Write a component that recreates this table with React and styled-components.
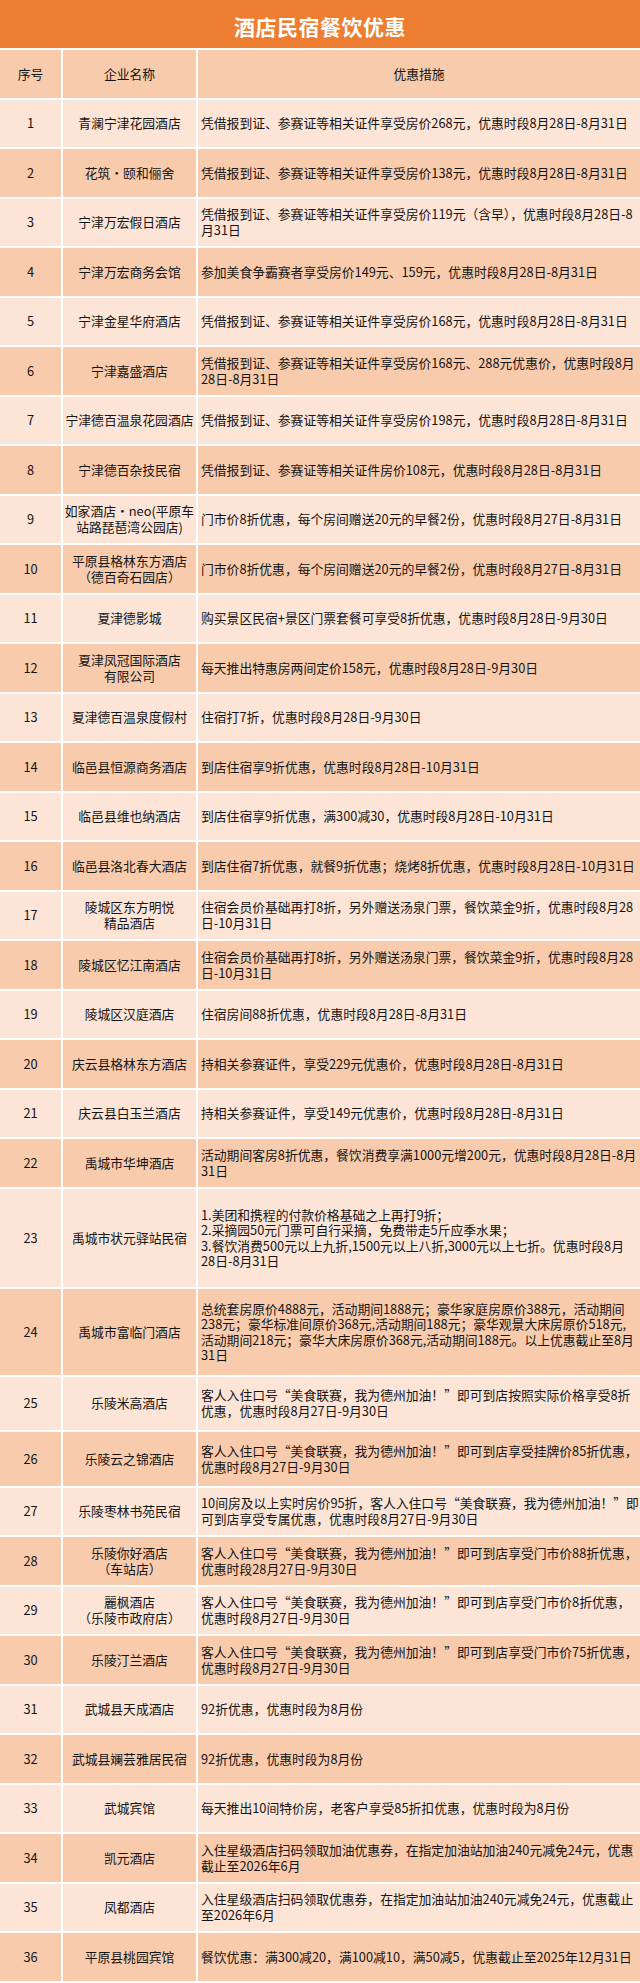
import React from "react";
import styled, { createGlobalStyle } from "styled-components";

const GlobalStyle = createGlobalStyle`
  html, body { margin: 0; padding: 0; background: #ffffff; }
  body {
    font-family: "Noto Sans CJK SC", "Noto Sans", sans-serif;
    color: #151515;
  }
`;

const Page = styled.div`
  width: 640px;
  background: #ffffff;
`;

const TitleBar = styled.div`
  height: 48px;
  margin-bottom: 2px;
  background: #ed7d31;
  color: #ffffff;
  display: flex;
  align-items: center;
  justify-content: center;
  padding-top: 4px;
  box-sizing: border-box;
  font-size: 21px;
  font-weight: 700;
  letter-spacing: 0.5px;
`;

const Table = styled.div`
  display: flex;
  flex-direction: column;
  gap: 2px;
`;

const Row = styled.div`
  display: grid;
  grid-template-columns: 61px 133px 1fr;
  column-gap: 2px;
  height: ${(p) => p.$h}px;
`;

const Cell = styled.div`
  background: ${(p) => (p.$dark ? "#f8cbad" : "#fce4d6")};
  display: flex;
  align-items: center;
  justify-content: ${(p) => (p.$left ? "flex-start" : "center")};
  text-align: ${(p) => (p.$left ? "left" : "center")};
  padding: ${(p) => (p.$left ? "0 0 0 3px" : "0")};
  font-size: 12.8px;
  line-height: ${(p) => p.$lh}px;
  white-space: nowrap;
`;

const Lines = styled.div`
  display: flex;
  flex-direction: column;
  align-items: ${(p) => (p.$left ? "flex-start" : "center")};
`;

const rows = [
  ["青澜宁津花园酒店", "凭借报到证、参赛证等相关证件享受房价268元，优惠时段8月28日-8月31日"],
  ["花筑·颐和俪舍", "凭借报到证、参赛证等相关证件享受房价138元，优惠时段8月28日-8月31日"],
  ["宁津万宏假日酒店", ["凭借报到证、参赛证等相关证件享受房价119元（含早），优惠时段8月28日-8", "月31日"]],
  ["宁津万宏商务会馆", "参加美食争霸赛者享受房价149元、159元，优惠时段8月28日-8月31日"],
  ["宁津金星华府酒店", "凭借报到证、参赛证等相关证件享受房价168元，优惠时段8月28日-8月31日"],
  ["宁津嘉盛酒店", ["凭借报到证、参赛证等相关证件享受房价168元、288元优惠价，优惠时段8月", "28日-8月31日"]],
  ["宁津德百温泉花园酒店", "凭借报到证、参赛证等相关证件享受房价198元，优惠时段8月28日-8月31日"],
  ["宁津德百杂技民宿", "凭借报到证、参赛证等相关证件房价108元，优惠时段8月28日-8月31日"],
  [["如家酒店·neo(平原车", "站路琵琶湾公园店)"], "门市价8折优惠，每个房间赠送20元的早餐2份，优惠时段8月27日-8月31日"],
  [["平原县格林东方酒店", "（德百奇石园店）"], "门市价8折优惠，每个房间赠送20元的早餐2份，优惠时段8月27日-8月31日"],
  ["夏津德影城", "购买景区民宿+景区门票套餐可享受8折优惠，优惠时段8月28日-9月30日"],
  [["夏津凤冠国际酒店", "有限公司"], "每天推出特惠房两间定价158元，优惠时段8月28日-9月30日"],
  ["夏津德百温泉度假村", "住宿打7折，优惠时段8月28日-9月30日"],
  ["临邑县恒源商务酒店", "到店住宿享9折优惠，优惠时段8月28日-10月31日"],
  ["临邑县维也纳酒店", "到店住宿享9折优惠，满300减30，优惠时段8月28日-10月31日"],
  ["临邑县洛北春大酒店", "到店住宿7折优惠，就餐9折优惠；烧烤8折优惠，优惠时段8月28日-10月31日"],
  [["陵城区东方明悦", "精品酒店"], ["住宿会员价基础再打8折，另外赠送汤泉门票，餐饮菜金9折，优惠时段8月28", "日-10月31日"]],
  ["陵城区忆江南酒店", ["住宿会员价基础再打8折，另外赠送汤泉门票，餐饮菜金9折，优惠时段8月28", "日-10月31日"]],
  ["陵城区汉庭酒店", "住宿房间88折优惠，优惠时段8月28日-8月31日"],
  ["庆云县格林东方酒店", "持相关参赛证件，享受229元优惠价，优惠时段8月28日-8月31日"],
  ["庆云县白玉兰酒店", "持相关参赛证件，享受149元优惠价，优惠时段8月28日-8月31日"],
  ["禹城市华坤酒店", ["活动期间客房8折优惠，餐饮消费享满1000元增200元，优惠时段8月28日-8月", "31日"]],
  [
    "禹城市状元驿站民宿",
    [
      "1.美团和携程的付款价格基础之上再打9折；",
      "2.采摘园50元门票可自行采摘，免费带走5斤应季水果；",
      "3.餐饮消费500元以上九折,1500元以上八折,3000元以上七折。优惠时段8月",
      "28日-8月31日",
    ],
    15.5,
    98,
  ],
  [
    "禹城市富临门酒店",
    [
      "总统套房原价4888元，活动期间1888元；豪华家庭房原价388元，活动期间",
      "238元；豪华标准间原价368元,活动期间188元；豪华观景大床房原价518元,",
      "活动期间218元；豪华大床房原价368元,活动期间188元。以上优惠截止至8月",
      "31日",
    ],
    15.5,
    86,
  ],
  ["乐陵米高酒店", ["客人入住口号“美食联赛，我为德州加油！”即可到店按照实际价格享受8折", "优惠，优惠时段8月27日-9月30日"], 16, 53],
  ["乐陵云之锦酒店", ["客人入住口号“美食联赛，我为德州加油！”即可到店享受挂牌价85折优惠，", "优惠时段8月27日-9月30日"], 16, 54],
  ["乐陵枣林书苑民宿", ["10间房及以上实时房价95折，客人入住口号“美食联赛，我为德州加油！”即", "可到店享受专属优惠，优惠时段8月27日-9月30日"]],
  [["乐陵你好酒店", "（车站店）"], ["客人入住口号“美食联赛，我为德州加油！”即可到店享受门市价88折优惠，", "优惠时段28月27日-9月30日"]],
  [["麗枫酒店", "（乐陵市政府店）"], ["客人入住口号“美食联赛，我为德州加油！”即可到店享受门市价8折优惠，", "优惠时段8月27日-9月30日"]],
  ["乐陵汀兰酒店", ["客人入住口号“美食联赛，我为德州加油！”即可到店享受门市价75折优惠，", "优惠时段8月27日-9月30日"]],
  ["武城县天成酒店", "92折优惠，优惠时段为8月份"],
  ["武城县斓芸雅居民宿", "92折优惠，优惠时段为8月份"],
  ["武城宾馆", "每天推出10间特价房，老客户享受85折扣优惠，优惠时段为8月份"],
  ["凯元酒店", ["入住星级酒店扫码领取加油优惠券，在指定加油站加油240元减免24元，优惠", "截止至2026年6月"]],
  ["凤都酒店", ["入住星级酒店扫码领取优惠券，在指定加油站加油240元减免24元，优惠截止", "至2026年6月"]],
  ["平原县桃园宾馆", "餐饮优惠：满300减20，满100减10，满50减5，优惠截止至2025年12月31日"],
];

function Text({ value, left }) {
  const lines = Array.isArray(value) ? value : [value];
  return (
    <Lines $left={left}>
      {lines.map((l, i) => (
        <span key={i}>{l}</span>
      ))}
    </Lines>
  );
}

export default function App() {
  return (
    <Page>
      <GlobalStyle />
      <TitleBar>酒店民宿餐饮优惠</TitleBar>
      <Table>
        <Row $h={47.5}>
          <Cell $dark $lh={16}>序号</Cell>
          <Cell $dark $lh={16}>企业名称</Cell>
          <Cell $dark $lh={16}>优惠措施</Cell>
        </Row>
        {rows.map(([name, desc, lh = 16, h = 47.5], i) => {
          const dark = i % 2 === 1;
          return (
            <Row key={i} $h={h}>
              <Cell $dark={dark} $lh={16}>{i + 1}</Cell>
              <Cell $dark={dark} $lh={16}>
                <Text value={name} />
              </Cell>
              <Cell $dark={dark} $left $lh={lh}>
                <Text value={desc} left />
              </Cell>
            </Row>
          );
        })}
      </Table>
    </Page>
  );
}
